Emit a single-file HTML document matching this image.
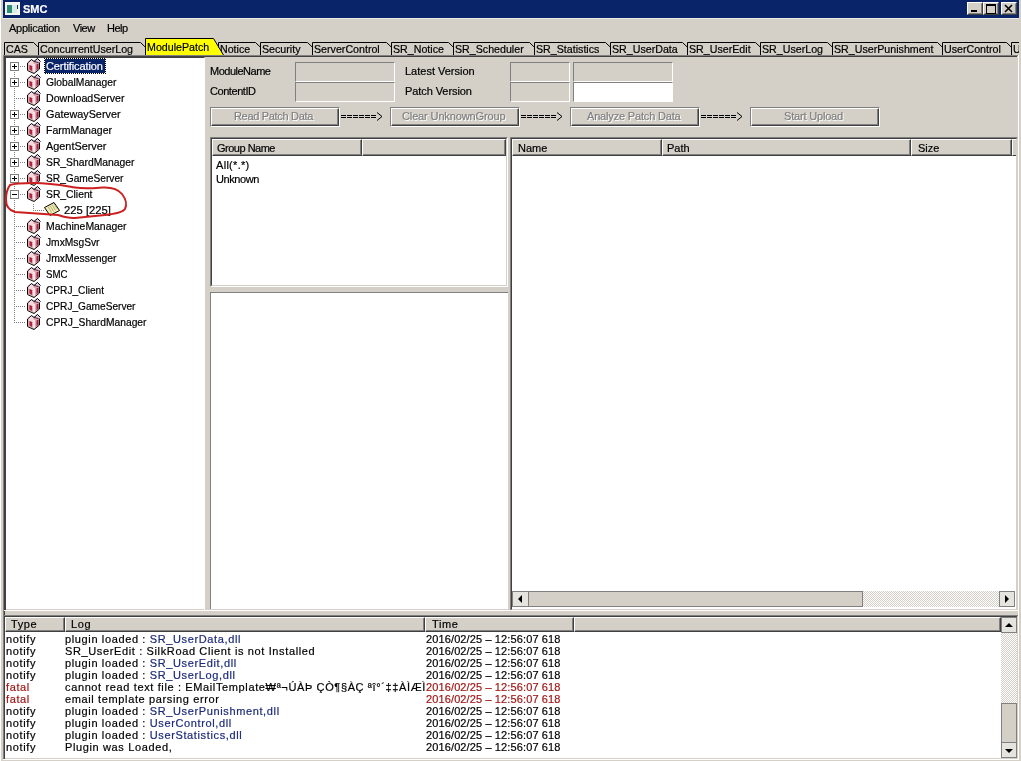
<!DOCTYPE html>
<html><head><meta charset="utf-8">
<style>
*{box-sizing:border-box}
html,body{margin:0;padding:0}
body{width:1021px;height:761px;overflow:hidden;position:relative;background:#d4d0c8;font-family:"Liberation Sans",sans-serif;font-size:11px;color:#000}
.a{position:absolute}
.t{position:absolute;white-space:pre;line-height:1;will-change:transform;-webkit-text-stroke:0.2px currentColor}
text{stroke:currentColor;stroke-width:0.2px}
svg{will-change:transform}
.sunk{position:absolute;background:#fff;border-style:solid;border-width:1px;border-color:#808080 #fff #fff #808080}
.sunk>.in{position:absolute;left:0;top:0;right:0;bottom:0;border-style:solid;border-width:1px;border-color:#404040 #d4d0c8 #d4d0c8 #404040}
.btn{position:absolute;background:#d4d0c8;border-style:solid;border-width:1px;border-color:#fff #404040 #404040 #fff}
.pbtn{position:absolute;background:#d4d0c8;border-style:solid;border-width:1px;border-color:#808080 #fff #fff #808080}
.pbtn>.in{position:absolute;left:0;top:0;right:0;bottom:0;border-style:solid;border-width:1px;border-color:#fff #404040 #404040 #fff}
.pbtn>.in>.in{position:absolute;left:0;top:0;right:0;bottom:0;border-right:1px solid #808080;border-bottom:1px solid #808080}
.btn>.in{position:absolute;left:0;top:0;right:0;bottom:0;border-style:solid;border-width:1px;border-color:#d4d0c8 #808080 #808080 #d4d0c8}
.hdr{position:absolute;background:#d4d0c8;border-style:solid;border-width:1px;border-color:#fff #404040 #404040 #fff}
.hdr>.in{position:absolute;left:0;top:0;right:0;bottom:0;border-right:1px solid #808080;border-bottom:1px solid #808080}
.dis{color:#808080;text-shadow:1px 1px 0 #fff}
.fb{border:1px solid #808080;background:#e6e4de}
.ft{border:1px solid #808080;background:#d4d0c8}
.lg{font-size:11px;letter-spacing:0.63px;line-height:13px}
.tm{letter-spacing:0.12px}
.dith{background-color:#fff;background-image:linear-gradient(45deg,#d4d0c8 25%,transparent 25%,transparent 75%,#d4d0c8 75%),linear-gradient(45deg,#d4d0c8 25%,transparent 25%,transparent 75%,#d4d0c8 75%);background-size:2px 2px;background-position:0 0,1px 1px}
</style></head>
<body>
<!-- window edge -->
<div class="a" style="left:0;top:0;width:1px;height:761px;background:#fff"></div>
<!-- title bar -->
<div class="a" style="left:3px;top:0;width:1016px;height:18px;background:#0a246a"></div>
<div class="a" style="left:5px;top:2px;width:15px;height:13px;background:#f4f4f0"></div>
<div class="a" style="left:7px;top:5px;width:5px;height:8px;background:#2e8c78"></div>
<div class="a" style="left:12px;top:5px;width:5px;height:8px;background:#d8ece8"></div>
<div class="a" style="left:17px;top:5px;width:1px;height:4px;background:#203040"></div>
<div class="t" style="left:23px;top:4px;font-weight:bold;font-size:11px;color:#fff">SMC</div>
<div class="a" style="left:3px;top:18px;width:1016px;height:1px;background:#eceae4"></div>
<!-- caption buttons -->
<div class="btn" style="left:967px;top:2px;width:16px;height:13px"><div class="in"></div></div>
<div class="btn" style="left:983px;top:2px;width:16px;height:13px"><div class="in"></div></div>
<div class="btn" style="left:1001px;top:2px;width:16px;height:13px"><div class="in"></div></div>
<svg class="a" style="left:0;top:0" width="1021" height="18">
 <rect x="971" y="10" width="6" height="2" fill="#000"/>
 <rect x="986" y="4" width="9" height="9" fill="none" stroke="#000" stroke-width="1" transform="translate(0.5,0.5)"/>
 <rect x="986" y="4" width="9" height="1" fill="#000" transform="translate(0.5,1)"/>
 <path d="M1005 5 L1012 12 M1012 5 L1005 12" stroke="#000" stroke-width="1.6"/>
</svg>
<!-- menu -->
<div class="t" style="left:9px;top:23px;letter-spacing:-0.26px">Application</div>
<div class="t" style="left:73px;top:23px;letter-spacing:-0.5px">View</div>
<div class="t" style="left:107px;top:23px;letter-spacing:-0.5px">Help</div>

<!-- tab strip -->
<svg class="a" style="left:0;top:0" width="1021" height="60"><polygon points="4,55 4,42 33,42 46.0,55" fill="#d4d0c8"/><path d="M4.5 55 V42.5 H33.5 L46.5 55" fill="none" stroke="#000" stroke-width="1"/><text x="6" y="52.5" font-family="Liberation Sans" font-size="10.67">CAS</text><polygon points="38,55 38,42 140,42 153.0,55" fill="#d4d0c8"/><path d="M38.5 55 V42.5 H140.5 L153.5 55" fill="none" stroke="#000" stroke-width="1"/><text x="40" y="52.5" font-family="Liberation Sans" font-size="10.67">ConcurrentUserLog</text><polygon points="218,55 218,42 255,42 268.0,55" fill="#d4d0c8"/><path d="M218.5 55 V42.5 H255.5 L268.5 55" fill="none" stroke="#000" stroke-width="1"/><text x="220" y="52.5" font-family="Liberation Sans" font-size="10.67">Notice</text><polygon points="260,55 260,42 307,42 320.0,55" fill="#d4d0c8"/><path d="M260.5 55 V42.5 H307.5 L320.5 55" fill="none" stroke="#000" stroke-width="1"/><text x="262" y="52.5" font-family="Liberation Sans" font-size="10.67">Security</text><polygon points="312,55 312,42 386,42 399.0,55" fill="#d4d0c8"/><path d="M312.5 55 V42.5 H386.5 L399.5 55" fill="none" stroke="#000" stroke-width="1"/><text x="314" y="52.5" font-family="Liberation Sans" font-size="10.67">ServerControl</text><polygon points="391,55 391,42 448,42 461.0,55" fill="#d4d0c8"/><path d="M391.5 55 V42.5 H448.5 L461.5 55" fill="none" stroke="#000" stroke-width="1"/><text x="393" y="52.5" font-family="Liberation Sans" font-size="10.67">SR_Notice</text><polygon points="453,55 453,42 529,42 542.0,55" fill="#d4d0c8"/><path d="M453.5 55 V42.5 H529.5 L542.5 55" fill="none" stroke="#000" stroke-width="1"/><text x="455" y="52.5" font-family="Liberation Sans" font-size="10.67">SR_Scheduler</text><polygon points="534,55 534,42 605,42 618.0,55" fill="#d4d0c8"/><path d="M534.5 55 V42.5 H605.5 L618.5 55" fill="none" stroke="#000" stroke-width="1"/><text x="536" y="52.5" font-family="Liberation Sans" font-size="10.67">SR_Statistics</text><polygon points="610,55 610,42 682,42 695.0,55" fill="#d4d0c8"/><path d="M610.5 55 V42.5 H682.5 L695.5 55" fill="none" stroke="#000" stroke-width="1"/><text x="612" y="52.5" font-family="Liberation Sans" font-size="10.67">SR_UserData</text><polygon points="687,55 687,42 755,42 768.0,55" fill="#d4d0c8"/><path d="M687.5 55 V42.5 H755.5 L768.5 55" fill="none" stroke="#000" stroke-width="1"/><text x="689" y="52.5" font-family="Liberation Sans" font-size="10.67">SR_UserEdit</text><polygon points="760,55 760,42 827,42 840.0,55" fill="#d4d0c8"/><path d="M760.5 55 V42.5 H827.5 L840.5 55" fill="none" stroke="#000" stroke-width="1"/><text x="762" y="52.5" font-family="Liberation Sans" font-size="10.67">SR_UserLog</text><polygon points="832,55 832,42 937,42 950.0,55" fill="#d4d0c8"/><path d="M832.5 55 V42.5 H937.5 L950.5 55" fill="none" stroke="#000" stroke-width="1"/><text x="834" y="52.5" font-family="Liberation Sans" font-size="10.67">SR_UserPunishment</text><polygon points="942,55 942,42 1006,42 1019.0,55" fill="#d4d0c8"/><path d="M942.5 55 V42.5 H1006.5 L1019.5 55" fill="none" stroke="#000" stroke-width="1"/><text x="944" y="52.5" font-family="Liberation Sans" font-size="10.67">UserControl</text><polygon points="1011,55 1011,42 1211,42 1224.0,55" fill="#d4d0c8"/><path d="M1011.5 55 V42.5 H1211.5 L1224.5 55" fill="none" stroke="#000" stroke-width="1"/><text x="1013" y="52.5" font-family="Liberation Sans" font-size="10.67">UserStatistics</text><polygon points="145,55 145,38 213,38 223.0,55" fill="#ffff00"/><path d="M145.5 55 V38.5 H213.5 L223.5 55" fill="none" stroke="#000" stroke-width="1"/><text x="147" y="50.5" font-family="Liberation Sans" font-size="10.67">ModulePatch</text></svg>

<!-- page frame -->
<div class="a" style="left:3px;top:55px;width:1015px;height:1px;background:#808080"></div>
<div class="a" style="left:4px;top:56px;width:1013px;height:1px;background:#404040"></div>
<div class="a" style="left:3px;top:55px;width:1px;height:705px;background:#808080"></div>
<div class="a" style="left:4px;top:56px;width:1px;height:703px;background:#404040"></div>
<div class="a" style="left:1018px;top:55px;width:1px;height:705px;background:#fff"></div>
<div class="a" style="left:3px;top:759px;width:1016px;height:1px;background:#fff"></div>

<!-- tree panel -->
<div class="a" style="left:5px;top:57px;width:200px;height:554px;background:#fff;border-style:solid;border-width:1px;border-color:#404040 #fff #fff #404040"></div>
<div class="a" style="left:6px;top:609px;width:198px;height:1px;background:#d4d0c8"></div>
<svg class="a" style="left:0;top:0" width="205" height="611"><rect x="16" y="66" width="1" height="1" fill="#808080"/><rect x="18" y="66" width="1" height="1" fill="#808080"/><rect x="20" y="66" width="1" height="1" fill="#808080"/><rect x="22" y="66" width="1" height="1" fill="#808080"/><rect x="24" y="66" width="1" height="1" fill="#808080"/><rect x="16" y="82" width="1" height="1" fill="#808080"/><rect x="18" y="82" width="1" height="1" fill="#808080"/><rect x="20" y="82" width="1" height="1" fill="#808080"/><rect x="22" y="82" width="1" height="1" fill="#808080"/><rect x="24" y="82" width="1" height="1" fill="#808080"/><rect x="16" y="98" width="1" height="1" fill="#808080"/><rect x="18" y="98" width="1" height="1" fill="#808080"/><rect x="20" y="98" width="1" height="1" fill="#808080"/><rect x="22" y="98" width="1" height="1" fill="#808080"/><rect x="24" y="98" width="1" height="1" fill="#808080"/><rect x="16" y="114" width="1" height="1" fill="#808080"/><rect x="18" y="114" width="1" height="1" fill="#808080"/><rect x="20" y="114" width="1" height="1" fill="#808080"/><rect x="22" y="114" width="1" height="1" fill="#808080"/><rect x="24" y="114" width="1" height="1" fill="#808080"/><rect x="16" y="130" width="1" height="1" fill="#808080"/><rect x="18" y="130" width="1" height="1" fill="#808080"/><rect x="20" y="130" width="1" height="1" fill="#808080"/><rect x="22" y="130" width="1" height="1" fill="#808080"/><rect x="24" y="130" width="1" height="1" fill="#808080"/><rect x="16" y="146" width="1" height="1" fill="#808080"/><rect x="18" y="146" width="1" height="1" fill="#808080"/><rect x="20" y="146" width="1" height="1" fill="#808080"/><rect x="22" y="146" width="1" height="1" fill="#808080"/><rect x="24" y="146" width="1" height="1" fill="#808080"/><rect x="16" y="162" width="1" height="1" fill="#808080"/><rect x="18" y="162" width="1" height="1" fill="#808080"/><rect x="20" y="162" width="1" height="1" fill="#808080"/><rect x="22" y="162" width="1" height="1" fill="#808080"/><rect x="24" y="162" width="1" height="1" fill="#808080"/><rect x="16" y="178" width="1" height="1" fill="#808080"/><rect x="18" y="178" width="1" height="1" fill="#808080"/><rect x="20" y="178" width="1" height="1" fill="#808080"/><rect x="22" y="178" width="1" height="1" fill="#808080"/><rect x="24" y="178" width="1" height="1" fill="#808080"/><rect x="16" y="194" width="1" height="1" fill="#808080"/><rect x="18" y="194" width="1" height="1" fill="#808080"/><rect x="20" y="194" width="1" height="1" fill="#808080"/><rect x="22" y="194" width="1" height="1" fill="#808080"/><rect x="24" y="194" width="1" height="1" fill="#808080"/><rect x="35" y="210" width="1" height="1" fill="#808080"/><rect x="37" y="210" width="1" height="1" fill="#808080"/><rect x="39" y="210" width="1" height="1" fill="#808080"/><rect x="41" y="210" width="1" height="1" fill="#808080"/><rect x="43" y="210" width="1" height="1" fill="#808080"/><rect x="16" y="226" width="1" height="1" fill="#808080"/><rect x="18" y="226" width="1" height="1" fill="#808080"/><rect x="20" y="226" width="1" height="1" fill="#808080"/><rect x="22" y="226" width="1" height="1" fill="#808080"/><rect x="24" y="226" width="1" height="1" fill="#808080"/><rect x="16" y="242" width="1" height="1" fill="#808080"/><rect x="18" y="242" width="1" height="1" fill="#808080"/><rect x="20" y="242" width="1" height="1" fill="#808080"/><rect x="22" y="242" width="1" height="1" fill="#808080"/><rect x="24" y="242" width="1" height="1" fill="#808080"/><rect x="16" y="258" width="1" height="1" fill="#808080"/><rect x="18" y="258" width="1" height="1" fill="#808080"/><rect x="20" y="258" width="1" height="1" fill="#808080"/><rect x="22" y="258" width="1" height="1" fill="#808080"/><rect x="24" y="258" width="1" height="1" fill="#808080"/><rect x="16" y="274" width="1" height="1" fill="#808080"/><rect x="18" y="274" width="1" height="1" fill="#808080"/><rect x="20" y="274" width="1" height="1" fill="#808080"/><rect x="22" y="274" width="1" height="1" fill="#808080"/><rect x="24" y="274" width="1" height="1" fill="#808080"/><rect x="16" y="290" width="1" height="1" fill="#808080"/><rect x="18" y="290" width="1" height="1" fill="#808080"/><rect x="20" y="290" width="1" height="1" fill="#808080"/><rect x="22" y="290" width="1" height="1" fill="#808080"/><rect x="24" y="290" width="1" height="1" fill="#808080"/><rect x="16" y="306" width="1" height="1" fill="#808080"/><rect x="18" y="306" width="1" height="1" fill="#808080"/><rect x="20" y="306" width="1" height="1" fill="#808080"/><rect x="22" y="306" width="1" height="1" fill="#808080"/><rect x="24" y="306" width="1" height="1" fill="#808080"/><rect x="16" y="322" width="1" height="1" fill="#808080"/><rect x="18" y="322" width="1" height="1" fill="#808080"/><rect x="20" y="322" width="1" height="1" fill="#808080"/><rect x="22" y="322" width="1" height="1" fill="#808080"/><rect x="24" y="322" width="1" height="1" fill="#808080"/><rect x="14" y="66" width="1" height="1" fill="#808080"/><rect x="14" y="68" width="1" height="1" fill="#808080"/><rect x="14" y="70" width="1" height="1" fill="#808080"/><rect x="14" y="72" width="1" height="1" fill="#808080"/><rect x="14" y="74" width="1" height="1" fill="#808080"/><rect x="14" y="76" width="1" height="1" fill="#808080"/><rect x="14" y="78" width="1" height="1" fill="#808080"/><rect x="14" y="80" width="1" height="1" fill="#808080"/><rect x="14" y="82" width="1" height="1" fill="#808080"/><rect x="14" y="84" width="1" height="1" fill="#808080"/><rect x="14" y="86" width="1" height="1" fill="#808080"/><rect x="14" y="88" width="1" height="1" fill="#808080"/><rect x="14" y="90" width="1" height="1" fill="#808080"/><rect x="14" y="92" width="1" height="1" fill="#808080"/><rect x="14" y="94" width="1" height="1" fill="#808080"/><rect x="14" y="96" width="1" height="1" fill="#808080"/><rect x="14" y="98" width="1" height="1" fill="#808080"/><rect x="14" y="100" width="1" height="1" fill="#808080"/><rect x="14" y="102" width="1" height="1" fill="#808080"/><rect x="14" y="104" width="1" height="1" fill="#808080"/><rect x="14" y="106" width="1" height="1" fill="#808080"/><rect x="14" y="108" width="1" height="1" fill="#808080"/><rect x="14" y="110" width="1" height="1" fill="#808080"/><rect x="14" y="112" width="1" height="1" fill="#808080"/><rect x="14" y="114" width="1" height="1" fill="#808080"/><rect x="14" y="116" width="1" height="1" fill="#808080"/><rect x="14" y="118" width="1" height="1" fill="#808080"/><rect x="14" y="120" width="1" height="1" fill="#808080"/><rect x="14" y="122" width="1" height="1" fill="#808080"/><rect x="14" y="124" width="1" height="1" fill="#808080"/><rect x="14" y="126" width="1" height="1" fill="#808080"/><rect x="14" y="128" width="1" height="1" fill="#808080"/><rect x="14" y="130" width="1" height="1" fill="#808080"/><rect x="14" y="132" width="1" height="1" fill="#808080"/><rect x="14" y="134" width="1" height="1" fill="#808080"/><rect x="14" y="136" width="1" height="1" fill="#808080"/><rect x="14" y="138" width="1" height="1" fill="#808080"/><rect x="14" y="140" width="1" height="1" fill="#808080"/><rect x="14" y="142" width="1" height="1" fill="#808080"/><rect x="14" y="144" width="1" height="1" fill="#808080"/><rect x="14" y="146" width="1" height="1" fill="#808080"/><rect x="14" y="148" width="1" height="1" fill="#808080"/><rect x="14" y="150" width="1" height="1" fill="#808080"/><rect x="14" y="152" width="1" height="1" fill="#808080"/><rect x="14" y="154" width="1" height="1" fill="#808080"/><rect x="14" y="156" width="1" height="1" fill="#808080"/><rect x="14" y="158" width="1" height="1" fill="#808080"/><rect x="14" y="160" width="1" height="1" fill="#808080"/><rect x="14" y="162" width="1" height="1" fill="#808080"/><rect x="14" y="164" width="1" height="1" fill="#808080"/><rect x="14" y="166" width="1" height="1" fill="#808080"/><rect x="14" y="168" width="1" height="1" fill="#808080"/><rect x="14" y="170" width="1" height="1" fill="#808080"/><rect x="14" y="172" width="1" height="1" fill="#808080"/><rect x="14" y="174" width="1" height="1" fill="#808080"/><rect x="14" y="176" width="1" height="1" fill="#808080"/><rect x="14" y="178" width="1" height="1" fill="#808080"/><rect x="14" y="180" width="1" height="1" fill="#808080"/><rect x="14" y="182" width="1" height="1" fill="#808080"/><rect x="14" y="184" width="1" height="1" fill="#808080"/><rect x="14" y="186" width="1" height="1" fill="#808080"/><rect x="14" y="188" width="1" height="1" fill="#808080"/><rect x="14" y="190" width="1" height="1" fill="#808080"/><rect x="14" y="192" width="1" height="1" fill="#808080"/><rect x="14" y="194" width="1" height="1" fill="#808080"/><rect x="14" y="196" width="1" height="1" fill="#808080"/><rect x="14" y="198" width="1" height="1" fill="#808080"/><rect x="14" y="200" width="1" height="1" fill="#808080"/><rect x="14" y="202" width="1" height="1" fill="#808080"/><rect x="14" y="204" width="1" height="1" fill="#808080"/><rect x="14" y="206" width="1" height="1" fill="#808080"/><rect x="14" y="208" width="1" height="1" fill="#808080"/><rect x="14" y="210" width="1" height="1" fill="#808080"/><rect x="14" y="212" width="1" height="1" fill="#808080"/><rect x="14" y="214" width="1" height="1" fill="#808080"/><rect x="14" y="216" width="1" height="1" fill="#808080"/><rect x="14" y="218" width="1" height="1" fill="#808080"/><rect x="14" y="220" width="1" height="1" fill="#808080"/><rect x="14" y="222" width="1" height="1" fill="#808080"/><rect x="14" y="224" width="1" height="1" fill="#808080"/><rect x="14" y="226" width="1" height="1" fill="#808080"/><rect x="14" y="228" width="1" height="1" fill="#808080"/><rect x="14" y="230" width="1" height="1" fill="#808080"/><rect x="14" y="232" width="1" height="1" fill="#808080"/><rect x="14" y="234" width="1" height="1" fill="#808080"/><rect x="14" y="236" width="1" height="1" fill="#808080"/><rect x="14" y="238" width="1" height="1" fill="#808080"/><rect x="14" y="240" width="1" height="1" fill="#808080"/><rect x="14" y="242" width="1" height="1" fill="#808080"/><rect x="14" y="244" width="1" height="1" fill="#808080"/><rect x="14" y="246" width="1" height="1" fill="#808080"/><rect x="14" y="248" width="1" height="1" fill="#808080"/><rect x="14" y="250" width="1" height="1" fill="#808080"/><rect x="14" y="252" width="1" height="1" fill="#808080"/><rect x="14" y="254" width="1" height="1" fill="#808080"/><rect x="14" y="256" width="1" height="1" fill="#808080"/><rect x="14" y="258" width="1" height="1" fill="#808080"/><rect x="14" y="260" width="1" height="1" fill="#808080"/><rect x="14" y="262" width="1" height="1" fill="#808080"/><rect x="14" y="264" width="1" height="1" fill="#808080"/><rect x="14" y="266" width="1" height="1" fill="#808080"/><rect x="14" y="268" width="1" height="1" fill="#808080"/><rect x="14" y="270" width="1" height="1" fill="#808080"/><rect x="14" y="272" width="1" height="1" fill="#808080"/><rect x="14" y="274" width="1" height="1" fill="#808080"/><rect x="14" y="276" width="1" height="1" fill="#808080"/><rect x="14" y="278" width="1" height="1" fill="#808080"/><rect x="14" y="280" width="1" height="1" fill="#808080"/><rect x="14" y="282" width="1" height="1" fill="#808080"/><rect x="14" y="284" width="1" height="1" fill="#808080"/><rect x="14" y="286" width="1" height="1" fill="#808080"/><rect x="14" y="288" width="1" height="1" fill="#808080"/><rect x="14" y="290" width="1" height="1" fill="#808080"/><rect x="14" y="292" width="1" height="1" fill="#808080"/><rect x="14" y="294" width="1" height="1" fill="#808080"/><rect x="14" y="296" width="1" height="1" fill="#808080"/><rect x="14" y="298" width="1" height="1" fill="#808080"/><rect x="14" y="300" width="1" height="1" fill="#808080"/><rect x="14" y="302" width="1" height="1" fill="#808080"/><rect x="14" y="304" width="1" height="1" fill="#808080"/><rect x="14" y="306" width="1" height="1" fill="#808080"/><rect x="14" y="308" width="1" height="1" fill="#808080"/><rect x="14" y="310" width="1" height="1" fill="#808080"/><rect x="14" y="312" width="1" height="1" fill="#808080"/><rect x="14" y="314" width="1" height="1" fill="#808080"/><rect x="14" y="316" width="1" height="1" fill="#808080"/><rect x="14" y="318" width="1" height="1" fill="#808080"/><rect x="14" y="320" width="1" height="1" fill="#808080"/><rect x="14" y="322" width="1" height="1" fill="#808080"/><rect x="33" y="204" width="1" height="1" fill="#808080"/><rect x="33" y="206" width="1" height="1" fill="#808080"/><rect x="33" y="208" width="1" height="1" fill="#808080"/><rect x="33" y="210" width="1" height="1" fill="#808080"/><rect x="10.5" y="62.5" width="8" height="8" fill="#fff" stroke="#808080"/><rect x="12" y="66" width="5" height="1" fill="#000"/><rect x="14" y="64" width="1" height="5" fill="#000"/><g transform="translate(27,58)"><polygon points="1,5 4.5,1.5 7,3 10.5,0 13.5,3.5 12.5,4.5 12.5,10.5 7,15 1,12" fill="#e4a8b2"/><polygon points="1.5,5 4.5,2 7,3.5 6,8 2,7" fill="#f6d8dc"/><polygon points="7,3 10.5,0.5 13,3.5 12,4.5 9,5" fill="#dcd4ec"/><rect x="6" y="6" width="2" height="8" fill="#f4e4e8"/><path d="M2.5 7 L2.5 11.5 L5 13 L5 8 Z" fill="#a82840"/><path d="M9.5 6.5 L11.5 5.5 L11.5 10.5 L9.5 12.5 Z" fill="#982038"/><polyline points="0.5,12.5 0.5,5 4.5,1.5 7,3.5 10.5,0.5 13.5,3.5" fill="none" stroke="#000" stroke-width="1"/><polyline points="12.5,4.5 12.5,11 7,15.5 0.5,12.5" fill="none" stroke="#000" stroke-width="1"/><path d="M7 3.5 L11.5 4.5" stroke="#401018" stroke-width="1"/></g><rect x="44" y="58" width="62" height="16" fill="#0a246a"/><rect x="44" y="58" width="1" height="1" fill="#000"/><rect x="44" y="73" width="1" height="1" fill="#fff"/><rect x="45" y="58" width="1" height="1" fill="#fff"/><rect x="45" y="73" width="1" height="1" fill="#000"/><rect x="46" y="58" width="1" height="1" fill="#000"/><rect x="46" y="73" width="1" height="1" fill="#fff"/><rect x="47" y="58" width="1" height="1" fill="#fff"/><rect x="47" y="73" width="1" height="1" fill="#000"/><rect x="48" y="58" width="1" height="1" fill="#000"/><rect x="48" y="73" width="1" height="1" fill="#fff"/><rect x="49" y="58" width="1" height="1" fill="#fff"/><rect x="49" y="73" width="1" height="1" fill="#000"/><rect x="50" y="58" width="1" height="1" fill="#000"/><rect x="50" y="73" width="1" height="1" fill="#fff"/><rect x="51" y="58" width="1" height="1" fill="#fff"/><rect x="51" y="73" width="1" height="1" fill="#000"/><rect x="52" y="58" width="1" height="1" fill="#000"/><rect x="52" y="73" width="1" height="1" fill="#fff"/><rect x="53" y="58" width="1" height="1" fill="#fff"/><rect x="53" y="73" width="1" height="1" fill="#000"/><rect x="54" y="58" width="1" height="1" fill="#000"/><rect x="54" y="73" width="1" height="1" fill="#fff"/><rect x="55" y="58" width="1" height="1" fill="#fff"/><rect x="55" y="73" width="1" height="1" fill="#000"/><rect x="56" y="58" width="1" height="1" fill="#000"/><rect x="56" y="73" width="1" height="1" fill="#fff"/><rect x="57" y="58" width="1" height="1" fill="#fff"/><rect x="57" y="73" width="1" height="1" fill="#000"/><rect x="58" y="58" width="1" height="1" fill="#000"/><rect x="58" y="73" width="1" height="1" fill="#fff"/><rect x="59" y="58" width="1" height="1" fill="#fff"/><rect x="59" y="73" width="1" height="1" fill="#000"/><rect x="60" y="58" width="1" height="1" fill="#000"/><rect x="60" y="73" width="1" height="1" fill="#fff"/><rect x="61" y="58" width="1" height="1" fill="#fff"/><rect x="61" y="73" width="1" height="1" fill="#000"/><rect x="62" y="58" width="1" height="1" fill="#000"/><rect x="62" y="73" width="1" height="1" fill="#fff"/><rect x="63" y="58" width="1" height="1" fill="#fff"/><rect x="63" y="73" width="1" height="1" fill="#000"/><rect x="64" y="58" width="1" height="1" fill="#000"/><rect x="64" y="73" width="1" height="1" fill="#fff"/><rect x="65" y="58" width="1" height="1" fill="#fff"/><rect x="65" y="73" width="1" height="1" fill="#000"/><rect x="66" y="58" width="1" height="1" fill="#000"/><rect x="66" y="73" width="1" height="1" fill="#fff"/><rect x="67" y="58" width="1" height="1" fill="#fff"/><rect x="67" y="73" width="1" height="1" fill="#000"/><rect x="68" y="58" width="1" height="1" fill="#000"/><rect x="68" y="73" width="1" height="1" fill="#fff"/><rect x="69" y="58" width="1" height="1" fill="#fff"/><rect x="69" y="73" width="1" height="1" fill="#000"/><rect x="70" y="58" width="1" height="1" fill="#000"/><rect x="70" y="73" width="1" height="1" fill="#fff"/><rect x="71" y="58" width="1" height="1" fill="#fff"/><rect x="71" y="73" width="1" height="1" fill="#000"/><rect x="72" y="58" width="1" height="1" fill="#000"/><rect x="72" y="73" width="1" height="1" fill="#fff"/><rect x="73" y="58" width="1" height="1" fill="#fff"/><rect x="73" y="73" width="1" height="1" fill="#000"/><rect x="74" y="58" width="1" height="1" fill="#000"/><rect x="74" y="73" width="1" height="1" fill="#fff"/><rect x="75" y="58" width="1" height="1" fill="#fff"/><rect x="75" y="73" width="1" height="1" fill="#000"/><rect x="76" y="58" width="1" height="1" fill="#000"/><rect x="76" y="73" width="1" height="1" fill="#fff"/><rect x="77" y="58" width="1" height="1" fill="#fff"/><rect x="77" y="73" width="1" height="1" fill="#000"/><rect x="78" y="58" width="1" height="1" fill="#000"/><rect x="78" y="73" width="1" height="1" fill="#fff"/><rect x="79" y="58" width="1" height="1" fill="#fff"/><rect x="79" y="73" width="1" height="1" fill="#000"/><rect x="80" y="58" width="1" height="1" fill="#000"/><rect x="80" y="73" width="1" height="1" fill="#fff"/><rect x="81" y="58" width="1" height="1" fill="#fff"/><rect x="81" y="73" width="1" height="1" fill="#000"/><rect x="82" y="58" width="1" height="1" fill="#000"/><rect x="82" y="73" width="1" height="1" fill="#fff"/><rect x="83" y="58" width="1" height="1" fill="#fff"/><rect x="83" y="73" width="1" height="1" fill="#000"/><rect x="84" y="58" width="1" height="1" fill="#000"/><rect x="84" y="73" width="1" height="1" fill="#fff"/><rect x="85" y="58" width="1" height="1" fill="#fff"/><rect x="85" y="73" width="1" height="1" fill="#000"/><rect x="86" y="58" width="1" height="1" fill="#000"/><rect x="86" y="73" width="1" height="1" fill="#fff"/><rect x="87" y="58" width="1" height="1" fill="#fff"/><rect x="87" y="73" width="1" height="1" fill="#000"/><rect x="88" y="58" width="1" height="1" fill="#000"/><rect x="88" y="73" width="1" height="1" fill="#fff"/><rect x="89" y="58" width="1" height="1" fill="#fff"/><rect x="89" y="73" width="1" height="1" fill="#000"/><rect x="90" y="58" width="1" height="1" fill="#000"/><rect x="90" y="73" width="1" height="1" fill="#fff"/><rect x="91" y="58" width="1" height="1" fill="#fff"/><rect x="91" y="73" width="1" height="1" fill="#000"/><rect x="92" y="58" width="1" height="1" fill="#000"/><rect x="92" y="73" width="1" height="1" fill="#fff"/><rect x="93" y="58" width="1" height="1" fill="#fff"/><rect x="93" y="73" width="1" height="1" fill="#000"/><rect x="94" y="58" width="1" height="1" fill="#000"/><rect x="94" y="73" width="1" height="1" fill="#fff"/><rect x="95" y="58" width="1" height="1" fill="#fff"/><rect x="95" y="73" width="1" height="1" fill="#000"/><rect x="96" y="58" width="1" height="1" fill="#000"/><rect x="96" y="73" width="1" height="1" fill="#fff"/><rect x="97" y="58" width="1" height="1" fill="#fff"/><rect x="97" y="73" width="1" height="1" fill="#000"/><rect x="98" y="58" width="1" height="1" fill="#000"/><rect x="98" y="73" width="1" height="1" fill="#fff"/><rect x="99" y="58" width="1" height="1" fill="#fff"/><rect x="99" y="73" width="1" height="1" fill="#000"/><rect x="100" y="58" width="1" height="1" fill="#000"/><rect x="100" y="73" width="1" height="1" fill="#fff"/><rect x="101" y="58" width="1" height="1" fill="#fff"/><rect x="101" y="73" width="1" height="1" fill="#000"/><rect x="102" y="58" width="1" height="1" fill="#000"/><rect x="102" y="73" width="1" height="1" fill="#fff"/><rect x="103" y="58" width="1" height="1" fill="#fff"/><rect x="103" y="73" width="1" height="1" fill="#000"/><rect x="104" y="58" width="1" height="1" fill="#000"/><rect x="104" y="73" width="1" height="1" fill="#fff"/><rect x="105" y="58" width="1" height="1" fill="#fff"/><rect x="105" y="73" width="1" height="1" fill="#000"/><rect x="44" y="59" width="1" height="1" fill="#fff"/><rect x="105" y="59" width="1" height="1" fill="#000"/><rect x="44" y="60" width="1" height="1" fill="#000"/><rect x="105" y="60" width="1" height="1" fill="#fff"/><rect x="44" y="61" width="1" height="1" fill="#fff"/><rect x="105" y="61" width="1" height="1" fill="#000"/><rect x="44" y="62" width="1" height="1" fill="#000"/><rect x="105" y="62" width="1" height="1" fill="#fff"/><rect x="44" y="63" width="1" height="1" fill="#fff"/><rect x="105" y="63" width="1" height="1" fill="#000"/><rect x="44" y="64" width="1" height="1" fill="#000"/><rect x="105" y="64" width="1" height="1" fill="#fff"/><rect x="44" y="65" width="1" height="1" fill="#fff"/><rect x="105" y="65" width="1" height="1" fill="#000"/><rect x="44" y="66" width="1" height="1" fill="#000"/><rect x="105" y="66" width="1" height="1" fill="#fff"/><rect x="44" y="67" width="1" height="1" fill="#fff"/><rect x="105" y="67" width="1" height="1" fill="#000"/><rect x="44" y="68" width="1" height="1" fill="#000"/><rect x="105" y="68" width="1" height="1" fill="#fff"/><rect x="44" y="69" width="1" height="1" fill="#fff"/><rect x="105" y="69" width="1" height="1" fill="#000"/><rect x="44" y="70" width="1" height="1" fill="#000"/><rect x="105" y="70" width="1" height="1" fill="#fff"/><rect x="44" y="71" width="1" height="1" fill="#fff"/><rect x="105" y="71" width="1" height="1" fill="#000"/><rect x="44" y="72" width="1" height="1" fill="#000"/><rect x="105" y="72" width="1" height="1" fill="#fff"/><text x="46" y="70" font-family="Liberation Sans" font-size="11" letter-spacing="-0.1" fill="#fff" style="stroke:#fff;stroke-width:0.2px">Certification</text><rect x="10.5" y="78.5" width="8" height="8" fill="#fff" stroke="#808080"/><rect x="12" y="82" width="5" height="1" fill="#000"/><rect x="14" y="80" width="1" height="5" fill="#000"/><g transform="translate(27,74)"><polygon points="1,5 4.5,1.5 7,3 10.5,0 13.5,3.5 12.5,4.5 12.5,10.5 7,15 1,12" fill="#e4a8b2"/><polygon points="1.5,5 4.5,2 7,3.5 6,8 2,7" fill="#f6d8dc"/><polygon points="7,3 10.5,0.5 13,3.5 12,4.5 9,5" fill="#dcd4ec"/><rect x="6" y="6" width="2" height="8" fill="#f4e4e8"/><path d="M2.5 7 L2.5 11.5 L5 13 L5 8 Z" fill="#a82840"/><path d="M9.5 6.5 L11.5 5.5 L11.5 10.5 L9.5 12.5 Z" fill="#982038"/><polyline points="0.5,12.5 0.5,5 4.5,1.5 7,3.5 10.5,0.5 13.5,3.5" fill="none" stroke="#000" stroke-width="1"/><polyline points="12.5,4.5 12.5,11 7,15.5 0.5,12.5" fill="none" stroke="#000" stroke-width="1"/><path d="M7 3.5 L11.5 4.5" stroke="#401018" stroke-width="1"/></g><text x="46" y="86" font-family="Liberation Sans" font-size="11" textLength="70.5" lengthAdjust="spacingAndGlyphs">GlobalManager</text><g transform="translate(27,90)"><polygon points="1,5 4.5,1.5 7,3 10.5,0 13.5,3.5 12.5,4.5 12.5,10.5 7,15 1,12" fill="#e4a8b2"/><polygon points="1.5,5 4.5,2 7,3.5 6,8 2,7" fill="#f6d8dc"/><polygon points="7,3 10.5,0.5 13,3.5 12,4.5 9,5" fill="#dcd4ec"/><rect x="6" y="6" width="2" height="8" fill="#f4e4e8"/><path d="M2.5 7 L2.5 11.5 L5 13 L5 8 Z" fill="#a82840"/><path d="M9.5 6.5 L11.5 5.5 L11.5 10.5 L9.5 12.5 Z" fill="#982038"/><polyline points="0.5,12.5 0.5,5 4.5,1.5 7,3.5 10.5,0.5 13.5,3.5" fill="none" stroke="#000" stroke-width="1"/><polyline points="12.5,4.5 12.5,11 7,15.5 0.5,12.5" fill="none" stroke="#000" stroke-width="1"/><path d="M7 3.5 L11.5 4.5" stroke="#401018" stroke-width="1"/></g><text x="46" y="102" font-family="Liberation Sans" font-size="11" textLength="78.5" lengthAdjust="spacingAndGlyphs">DownloadServer</text><rect x="10.5" y="110.5" width="8" height="8" fill="#fff" stroke="#808080"/><rect x="12" y="114" width="5" height="1" fill="#000"/><rect x="14" y="112" width="1" height="5" fill="#000"/><g transform="translate(27,106)"><polygon points="1,5 4.5,1.5 7,3 10.5,0 13.5,3.5 12.5,4.5 12.5,10.5 7,15 1,12" fill="#e4a8b2"/><polygon points="1.5,5 4.5,2 7,3.5 6,8 2,7" fill="#f6d8dc"/><polygon points="7,3 10.5,0.5 13,3.5 12,4.5 9,5" fill="#dcd4ec"/><rect x="6" y="6" width="2" height="8" fill="#f4e4e8"/><path d="M2.5 7 L2.5 11.5 L5 13 L5 8 Z" fill="#a82840"/><path d="M9.5 6.5 L11.5 5.5 L11.5 10.5 L9.5 12.5 Z" fill="#982038"/><polyline points="0.5,12.5 0.5,5 4.5,1.5 7,3.5 10.5,0.5 13.5,3.5" fill="none" stroke="#000" stroke-width="1"/><polyline points="12.5,4.5 12.5,11 7,15.5 0.5,12.5" fill="none" stroke="#000" stroke-width="1"/><path d="M7 3.5 L11.5 4.5" stroke="#401018" stroke-width="1"/></g><text x="46" y="118" font-family="Liberation Sans" font-size="11" textLength="74.5" lengthAdjust="spacingAndGlyphs">GatewayServer</text><rect x="10.5" y="126.5" width="8" height="8" fill="#fff" stroke="#808080"/><rect x="12" y="130" width="5" height="1" fill="#000"/><rect x="14" y="128" width="1" height="5" fill="#000"/><g transform="translate(27,122)"><polygon points="1,5 4.5,1.5 7,3 10.5,0 13.5,3.5 12.5,4.5 12.5,10.5 7,15 1,12" fill="#e4a8b2"/><polygon points="1.5,5 4.5,2 7,3.5 6,8 2,7" fill="#f6d8dc"/><polygon points="7,3 10.5,0.5 13,3.5 12,4.5 9,5" fill="#dcd4ec"/><rect x="6" y="6" width="2" height="8" fill="#f4e4e8"/><path d="M2.5 7 L2.5 11.5 L5 13 L5 8 Z" fill="#a82840"/><path d="M9.5 6.5 L11.5 5.5 L11.5 10.5 L9.5 12.5 Z" fill="#982038"/><polyline points="0.5,12.5 0.5,5 4.5,1.5 7,3.5 10.5,0.5 13.5,3.5" fill="none" stroke="#000" stroke-width="1"/><polyline points="12.5,4.5 12.5,11 7,15.5 0.5,12.5" fill="none" stroke="#000" stroke-width="1"/><path d="M7 3.5 L11.5 4.5" stroke="#401018" stroke-width="1"/></g><text x="46" y="134" font-family="Liberation Sans" font-size="11" textLength="66.0" lengthAdjust="spacingAndGlyphs">FarmManager</text><rect x="10.5" y="142.5" width="8" height="8" fill="#fff" stroke="#808080"/><rect x="12" y="146" width="5" height="1" fill="#000"/><rect x="14" y="144" width="1" height="5" fill="#000"/><g transform="translate(27,138)"><polygon points="1,5 4.5,1.5 7,3 10.5,0 13.5,3.5 12.5,4.5 12.5,10.5 7,15 1,12" fill="#e4a8b2"/><polygon points="1.5,5 4.5,2 7,3.5 6,8 2,7" fill="#f6d8dc"/><polygon points="7,3 10.5,0.5 13,3.5 12,4.5 9,5" fill="#dcd4ec"/><rect x="6" y="6" width="2" height="8" fill="#f4e4e8"/><path d="M2.5 7 L2.5 11.5 L5 13 L5 8 Z" fill="#a82840"/><path d="M9.5 6.5 L11.5 5.5 L11.5 10.5 L9.5 12.5 Z" fill="#982038"/><polyline points="0.5,12.5 0.5,5 4.5,1.5 7,3.5 10.5,0.5 13.5,3.5" fill="none" stroke="#000" stroke-width="1"/><polyline points="12.5,4.5 12.5,11 7,15.5 0.5,12.5" fill="none" stroke="#000" stroke-width="1"/><path d="M7 3.5 L11.5 4.5" stroke="#401018" stroke-width="1"/></g><text x="46" y="150" font-family="Liberation Sans" font-size="11" textLength="60.5" lengthAdjust="spacingAndGlyphs">AgentServer</text><rect x="10.5" y="158.5" width="8" height="8" fill="#fff" stroke="#808080"/><rect x="12" y="162" width="5" height="1" fill="#000"/><rect x="14" y="160" width="1" height="5" fill="#000"/><g transform="translate(27,154)"><polygon points="1,5 4.5,1.5 7,3 10.5,0 13.5,3.5 12.5,4.5 12.5,10.5 7,15 1,12" fill="#e4a8b2"/><polygon points="1.5,5 4.5,2 7,3.5 6,8 2,7" fill="#f6d8dc"/><polygon points="7,3 10.5,0.5 13,3.5 12,4.5 9,5" fill="#dcd4ec"/><rect x="6" y="6" width="2" height="8" fill="#f4e4e8"/><path d="M2.5 7 L2.5 11.5 L5 13 L5 8 Z" fill="#a82840"/><path d="M9.5 6.5 L11.5 5.5 L11.5 10.5 L9.5 12.5 Z" fill="#982038"/><polyline points="0.5,12.5 0.5,5 4.5,1.5 7,3.5 10.5,0.5 13.5,3.5" fill="none" stroke="#000" stroke-width="1"/><polyline points="12.5,4.5 12.5,11 7,15.5 0.5,12.5" fill="none" stroke="#000" stroke-width="1"/><path d="M7 3.5 L11.5 4.5" stroke="#401018" stroke-width="1"/></g><text x="46" y="166" font-family="Liberation Sans" font-size="11" textLength="88.5" lengthAdjust="spacingAndGlyphs">SR_ShardManager</text><rect x="10.5" y="174.5" width="8" height="8" fill="#fff" stroke="#808080"/><rect x="12" y="178" width="5" height="1" fill="#000"/><rect x="14" y="176" width="1" height="5" fill="#000"/><g transform="translate(27,170)"><polygon points="1,5 4.5,1.5 7,3 10.5,0 13.5,3.5 12.5,4.5 12.5,10.5 7,15 1,12" fill="#e4a8b2"/><polygon points="1.5,5 4.5,2 7,3.5 6,8 2,7" fill="#f6d8dc"/><polygon points="7,3 10.5,0.5 13,3.5 12,4.5 9,5" fill="#dcd4ec"/><rect x="6" y="6" width="2" height="8" fill="#f4e4e8"/><path d="M2.5 7 L2.5 11.5 L5 13 L5 8 Z" fill="#a82840"/><path d="M9.5 6.5 L11.5 5.5 L11.5 10.5 L9.5 12.5 Z" fill="#982038"/><polyline points="0.5,12.5 0.5,5 4.5,1.5 7,3.5 10.5,0.5 13.5,3.5" fill="none" stroke="#000" stroke-width="1"/><polyline points="12.5,4.5 12.5,11 7,15.5 0.5,12.5" fill="none" stroke="#000" stroke-width="1"/><path d="M7 3.5 L11.5 4.5" stroke="#401018" stroke-width="1"/></g><text x="46" y="182" font-family="Liberation Sans" font-size="11" textLength="77.5" lengthAdjust="spacingAndGlyphs">SR_GameServer</text><rect x="10.5" y="190.5" width="8" height="8" fill="#fff" stroke="#808080"/><rect x="12" y="194" width="5" height="1" fill="#000"/><g transform="translate(27,186)"><polygon points="1,5 4.5,1.5 7,3 10.5,0 13.5,3.5 12.5,4.5 12.5,10.5 7,15 1,12" fill="#e4a8b2"/><polygon points="1.5,5 4.5,2 7,3.5 6,8 2,7" fill="#f6d8dc"/><polygon points="7,3 10.5,0.5 13,3.5 12,4.5 9,5" fill="#dcd4ec"/><rect x="6" y="6" width="2" height="8" fill="#f4e4e8"/><path d="M2.5 7 L2.5 11.5 L5 13 L5 8 Z" fill="#a82840"/><path d="M9.5 6.5 L11.5 5.5 L11.5 10.5 L9.5 12.5 Z" fill="#982038"/><polyline points="0.5,12.5 0.5,5 4.5,1.5 7,3.5 10.5,0.5 13.5,3.5" fill="none" stroke="#000" stroke-width="1"/><polyline points="12.5,4.5 12.5,11 7,15.5 0.5,12.5" fill="none" stroke="#000" stroke-width="1"/><path d="M7 3.5 L11.5 4.5" stroke="#401018" stroke-width="1"/></g><text x="46" y="198" font-family="Liberation Sans" font-size="11" textLength="46.5" lengthAdjust="spacingAndGlyphs">SR_Client</text><g transform="translate(44,202)"><polygon points="0.5,5.5 10,0.5 15.5,8.5 6,13.5" fill="#f2eeb0" stroke="#000" stroke-width="1" stroke-linejoin="miter"/><path d="M4 4.5 L7.6 10.5 M6 3.5 L9.6 9.5 M8 2.5 L11.6 8.5 M10 1.8 L13 6.8" stroke="#a8a078" stroke-width="0.8"/></g><text x="64" y="214" font-family="Liberation Sans" font-size="11" textLength="47.0" lengthAdjust="spacingAndGlyphs">225 [225]</text><g transform="translate(27,218)"><polygon points="1,5 4.5,1.5 7,3 10.5,0 13.5,3.5 12.5,4.5 12.5,10.5 7,15 1,12" fill="#e4a8b2"/><polygon points="1.5,5 4.5,2 7,3.5 6,8 2,7" fill="#f6d8dc"/><polygon points="7,3 10.5,0.5 13,3.5 12,4.5 9,5" fill="#dcd4ec"/><rect x="6" y="6" width="2" height="8" fill="#f4e4e8"/><path d="M2.5 7 L2.5 11.5 L5 13 L5 8 Z" fill="#a82840"/><path d="M9.5 6.5 L11.5 5.5 L11.5 10.5 L9.5 12.5 Z" fill="#982038"/><polyline points="0.5,12.5 0.5,5 4.5,1.5 7,3.5 10.5,0.5 13.5,3.5" fill="none" stroke="#000" stroke-width="1"/><polyline points="12.5,4.5 12.5,11 7,15.5 0.5,12.5" fill="none" stroke="#000" stroke-width="1"/><path d="M7 3.5 L11.5 4.5" stroke="#401018" stroke-width="1"/></g><text x="46" y="230" font-family="Liberation Sans" font-size="11" textLength="80.5" lengthAdjust="spacingAndGlyphs">MachineManager</text><g transform="translate(27,234)"><polygon points="1,5 4.5,1.5 7,3 10.5,0 13.5,3.5 12.5,4.5 12.5,10.5 7,15 1,12" fill="#e4a8b2"/><polygon points="1.5,5 4.5,2 7,3.5 6,8 2,7" fill="#f6d8dc"/><polygon points="7,3 10.5,0.5 13,3.5 12,4.5 9,5" fill="#dcd4ec"/><rect x="6" y="6" width="2" height="8" fill="#f4e4e8"/><path d="M2.5 7 L2.5 11.5 L5 13 L5 8 Z" fill="#a82840"/><path d="M9.5 6.5 L11.5 5.5 L11.5 10.5 L9.5 12.5 Z" fill="#982038"/><polyline points="0.5,12.5 0.5,5 4.5,1.5 7,3.5 10.5,0.5 13.5,3.5" fill="none" stroke="#000" stroke-width="1"/><polyline points="12.5,4.5 12.5,11 7,15.5 0.5,12.5" fill="none" stroke="#000" stroke-width="1"/><path d="M7 3.5 L11.5 4.5" stroke="#401018" stroke-width="1"/></g><text x="46" y="246" font-family="Liberation Sans" font-size="11" textLength="53.5" lengthAdjust="spacingAndGlyphs">JmxMsgSvr</text><g transform="translate(27,250)"><polygon points="1,5 4.5,1.5 7,3 10.5,0 13.5,3.5 12.5,4.5 12.5,10.5 7,15 1,12" fill="#e4a8b2"/><polygon points="1.5,5 4.5,2 7,3.5 6,8 2,7" fill="#f6d8dc"/><polygon points="7,3 10.5,0.5 13,3.5 12,4.5 9,5" fill="#dcd4ec"/><rect x="6" y="6" width="2" height="8" fill="#f4e4e8"/><path d="M2.5 7 L2.5 11.5 L5 13 L5 8 Z" fill="#a82840"/><path d="M9.5 6.5 L11.5 5.5 L11.5 10.5 L9.5 12.5 Z" fill="#982038"/><polyline points="0.5,12.5 0.5,5 4.5,1.5 7,3.5 10.5,0.5 13.5,3.5" fill="none" stroke="#000" stroke-width="1"/><polyline points="12.5,4.5 12.5,11 7,15.5 0.5,12.5" fill="none" stroke="#000" stroke-width="1"/><path d="M7 3.5 L11.5 4.5" stroke="#401018" stroke-width="1"/></g><text x="46" y="262" font-family="Liberation Sans" font-size="11" textLength="70.5" lengthAdjust="spacingAndGlyphs">JmxMessenger</text><g transform="translate(27,266)"><polygon points="1,5 4.5,1.5 7,3 10.5,0 13.5,3.5 12.5,4.5 12.5,10.5 7,15 1,12" fill="#e4a8b2"/><polygon points="1.5,5 4.5,2 7,3.5 6,8 2,7" fill="#f6d8dc"/><polygon points="7,3 10.5,0.5 13,3.5 12,4.5 9,5" fill="#dcd4ec"/><rect x="6" y="6" width="2" height="8" fill="#f4e4e8"/><path d="M2.5 7 L2.5 11.5 L5 13 L5 8 Z" fill="#a82840"/><path d="M9.5 6.5 L11.5 5.5 L11.5 10.5 L9.5 12.5 Z" fill="#982038"/><polyline points="0.5,12.5 0.5,5 4.5,1.5 7,3.5 10.5,0.5 13.5,3.5" fill="none" stroke="#000" stroke-width="1"/><polyline points="12.5,4.5 12.5,11 7,15.5 0.5,12.5" fill="none" stroke="#000" stroke-width="1"/><path d="M7 3.5 L11.5 4.5" stroke="#401018" stroke-width="1"/></g><text x="46" y="278" font-family="Liberation Sans" font-size="11" textLength="21.5" lengthAdjust="spacingAndGlyphs">SMC</text><g transform="translate(27,282)"><polygon points="1,5 4.5,1.5 7,3 10.5,0 13.5,3.5 12.5,4.5 12.5,10.5 7,15 1,12" fill="#e4a8b2"/><polygon points="1.5,5 4.5,2 7,3.5 6,8 2,7" fill="#f6d8dc"/><polygon points="7,3 10.5,0.5 13,3.5 12,4.5 9,5" fill="#dcd4ec"/><rect x="6" y="6" width="2" height="8" fill="#f4e4e8"/><path d="M2.5 7 L2.5 11.5 L5 13 L5 8 Z" fill="#a82840"/><path d="M9.5 6.5 L11.5 5.5 L11.5 10.5 L9.5 12.5 Z" fill="#982038"/><polyline points="0.5,12.5 0.5,5 4.5,1.5 7,3.5 10.5,0.5 13.5,3.5" fill="none" stroke="#000" stroke-width="1"/><polyline points="12.5,4.5 12.5,11 7,15.5 0.5,12.5" fill="none" stroke="#000" stroke-width="1"/><path d="M7 3.5 L11.5 4.5" stroke="#401018" stroke-width="1"/></g><text x="46" y="294" font-family="Liberation Sans" font-size="11" textLength="58.0" lengthAdjust="spacingAndGlyphs">CPRJ_Client</text><g transform="translate(27,298)"><polygon points="1,5 4.5,1.5 7,3 10.5,0 13.5,3.5 12.5,4.5 12.5,10.5 7,15 1,12" fill="#e4a8b2"/><polygon points="1.5,5 4.5,2 7,3.5 6,8 2,7" fill="#f6d8dc"/><polygon points="7,3 10.5,0.5 13,3.5 12,4.5 9,5" fill="#dcd4ec"/><rect x="6" y="6" width="2" height="8" fill="#f4e4e8"/><path d="M2.5 7 L2.5 11.5 L5 13 L5 8 Z" fill="#a82840"/><path d="M9.5 6.5 L11.5 5.5 L11.5 10.5 L9.5 12.5 Z" fill="#982038"/><polyline points="0.5,12.5 0.5,5 4.5,1.5 7,3.5 10.5,0.5 13.5,3.5" fill="none" stroke="#000" stroke-width="1"/><polyline points="12.5,4.5 12.5,11 7,15.5 0.5,12.5" fill="none" stroke="#000" stroke-width="1"/><path d="M7 3.5 L11.5 4.5" stroke="#401018" stroke-width="1"/></g><text x="46" y="310" font-family="Liberation Sans" font-size="11" textLength="89.5" lengthAdjust="spacingAndGlyphs">CPRJ_GameServer</text><g transform="translate(27,314)"><polygon points="1,5 4.5,1.5 7,3 10.5,0 13.5,3.5 12.5,4.5 12.5,10.5 7,15 1,12" fill="#e4a8b2"/><polygon points="1.5,5 4.5,2 7,3.5 6,8 2,7" fill="#f6d8dc"/><polygon points="7,3 10.5,0.5 13,3.5 12,4.5 9,5" fill="#dcd4ec"/><rect x="6" y="6" width="2" height="8" fill="#f4e4e8"/><path d="M2.5 7 L2.5 11.5 L5 13 L5 8 Z" fill="#a82840"/><path d="M9.5 6.5 L11.5 5.5 L11.5 10.5 L9.5 12.5 Z" fill="#982038"/><polyline points="0.5,12.5 0.5,5 4.5,1.5 7,3.5 10.5,0.5 13.5,3.5" fill="none" stroke="#000" stroke-width="1"/><polyline points="12.5,4.5 12.5,11 7,15.5 0.5,12.5" fill="none" stroke="#000" stroke-width="1"/><path d="M7 3.5 L11.5 4.5" stroke="#401018" stroke-width="1"/></g><text x="46" y="326" font-family="Liberation Sans" font-size="11" textLength="100.5" lengthAdjust="spacingAndGlyphs">CPRJ_ShardManager</text><path d="M10 185 C14 183.5 25 183 34 183 C50 183 60 185 75 187.5 C85 189 95 188 102 187.5 C110 187 118 189 122 194 C126 199 127 205 125 209 C123 212 115 214 105 215 C95 216 85 217 75 218 C68 218.5 64 217 58 215 C45 214 30 213 15 212 C8 210 6 205 6 200 C6 194 7 189 10 185 Z" fill="none" stroke="#cc2020" stroke-width="2"/></svg>

<!-- right top form -->
<div class="t" style="left:210px;top:66px;letter-spacing:-0.5px">ModuleName</div>
<div class="t" style="left:210px;top:86px;letter-spacing:-0.44px">ContentID</div>
<div class="t" style="left:405px;top:66px">Latest Version</div>
<div class="t" style="left:405px;top:86px;letter-spacing:-0.08px">Patch Version</div>
<div class="a" style="left:295px;top:62px;width:100px;height:20px;border:1px solid;border-color:#808080 #fff #fff #808080"></div>
<div class="a" style="left:295px;top:82px;width:100px;height:20px;border:1px solid;border-color:#808080 #fff #fff #808080"></div>
<div class="a" style="left:510px;top:62px;width:60px;height:20px;border:1px solid;border-color:#808080 #fff #fff #808080"></div>
<div class="a" style="left:510px;top:82px;width:60px;height:20px;border:1px solid;border-color:#808080 #fff #fff #808080"></div>
<div class="a" style="left:573px;top:62px;width:100px;height:20px;border:1px solid;border-color:#808080 #fff #fff #808080"></div>
<div class="a" style="left:573px;top:82px;width:100px;height:20px;border:1px solid;border-color:#808080 #fff #fff #808080;background:#fff"></div>

<div class="pbtn" style="left:210px;top:107px;width:130px;height:20px"><div class="in"><div class="in"></div></div></div>
<div class="pbtn" style="left:390px;top:107px;width:130px;height:20px"><div class="in"><div class="in"></div></div></div>
<div class="pbtn" style="left:570px;top:107px;width:130px;height:20px"><div class="in"><div class="in"></div></div></div>
<div class="pbtn" style="left:750px;top:107px;width:130px;height:20px"><div class="in"><div class="in"></div></div></div>
<div class="t dis" style="left:234px;top:111px;letter-spacing:-0.32px">Read Patch Data</div>
<div class="t dis" style="left:402px;top:111px;letter-spacing:-0.13px">Clear UnknownGroup</div>
<div class="t dis" style="left:587px;top:111px;letter-spacing:-0.17px">Analyze Patch Data</div>
<div class="t dis" style="left:784px;top:111px;letter-spacing:-0.18px">Start Upload</div>

<svg class="a" style="left:0;top:0" width="1021" height="140"><path d="M341 115.5 h5 M341 117.5 h5 M347 115.5 h5 M347 117.5 h5 M353 115.5 h5 M353 117.5 h5 M359 115.5 h5 M359 117.5 h5 M365 115.5 h5 M365 117.5 h5 M371 115.5 h5 M371 117.5 h5 M377 112.5 L382 116.5 L377 120.5" stroke="#000" stroke-width="1" fill="none"/><path d="M521 115.5 h5 M521 117.5 h5 M527 115.5 h5 M527 117.5 h5 M533 115.5 h5 M533 117.5 h5 M539 115.5 h5 M539 117.5 h5 M545 115.5 h5 M545 117.5 h5 M551 115.5 h5 M551 117.5 h5 M557 112.5 L562 116.5 L557 120.5" stroke="#000" stroke-width="1" fill="none"/><path d="M701 115.5 h5 M701 117.5 h5 M707 115.5 h5 M707 117.5 h5 M713 115.5 h5 M713 117.5 h5 M719 115.5 h5 M719 117.5 h5 M725 115.5 h5 M725 117.5 h5 M731 115.5 h5 M731 117.5 h5 M737 112.5 L742 116.5 L737 120.5" stroke="#000" stroke-width="1" fill="none"/></svg>
<!-- group list -->
<div class="sunk" style="left:210px;top:137px;width:298px;height:150px"><div class="in"></div></div>
<div class="hdr" style="left:212px;top:139px;width:150px;height:17px"><div class="in"></div></div>
<div class="hdr" style="left:362px;top:139px;width:144px;height:17px"><div class="in"></div></div>
<div class="t" style="left:217px;top:143px;letter-spacing:-0.5px">Group Name</div>
<div class="t" style="left:216px;top:160px;letter-spacing:0.3px">All(*.*)</div>
<div class="t" style="left:216px;top:174px;letter-spacing:-0.4px">Unknown</div>

<div class="a" style="left:210px;top:292px;width:298px;height:317px;background:#fff;border-top:1px solid #808080;border-left:1px solid #808080"></div>
<div class="a" style="left:211px;top:609px;width:297px;height:1px;background:#d4d0c8"></div>

<!-- right list -->
<div class="sunk" style="left:510px;top:137px;width:508px;height:474px;border-right-color:#d4d0c8"><div class="in"></div></div>
<div class="hdr" style="left:512px;top:139px;width:150px;height:17px"><div class="in"></div></div>
<div class="hdr" style="left:662px;top:139px;width:249px;height:17px"><div class="in"></div></div>
<div class="hdr" style="left:911px;top:139px;width:101px;height:17px"><div class="in"></div></div>
<div class="a" style="left:1012px;top:139px;width:4px;height:17px;background:#d4d0c8;border-left:1px solid #fff;border-top:1px solid #fff;border-bottom:1px solid #404040"></div>
<div class="t" style="left:518px;top:143px">Name</div>
<div class="t" style="left:667px;top:143px">Path</div>
<div class="t" style="left:918px;top:143px">Size</div>

<div class="a" style="left:4px;top:610px;width:1014px;height:1px;background:#fff"></div>
<div class="a dith" style="left:528px;top:591px;width:471px;height:16px"></div>
<div class="a fb" style="left:512px;top:591px;width:17px;height:16px"></div>
<div class="a ft" style="left:528px;top:591px;width:335px;height:16px"></div>
<div class="a fb" style="left:999px;top:591px;width:16px;height:16px"></div>
<svg class="a" style="left:512px;top:591px" width="503" height="16"><path d="M10 4 L6 8 L10 12 Z" fill="#000"/><path d="M493 4 L497 8 L493 12 Z" fill="#000"/></svg>
<!-- log list -->
<div class="a" style="left:3px;top:615px;width:1015px;height:1px;background:#808080"></div>
<div class="a" style="left:4px;top:616px;width:1013px;height:1px;background:#404040"></div>
<div class="a" style="left:5px;top:617px;width:1013px;height:142px;background:#fff"></div>
<div class="a" style="left:5px;top:758px;width:1013px;height:1px;background:#d4d0c8"></div>
<div class="a" style="left:1017px;top:617px;width:1px;height:142px;background:#d4d0c8"></div>
<div class="hdr" style="left:5px;top:617px;width:60px;height:15px"><div class="in"></div></div>
<div class="hdr" style="left:65px;top:617px;width:360px;height:15px"><div class="in"></div></div>
<div class="hdr" style="left:425px;top:617px;width:149px;height:15px"><div class="in"></div></div>
<div class="hdr" style="left:574px;top:617px;width:427px;height:15px"><div class="in"></div></div>
<div class="t lg" style="left:11px;top:618px">Type</div>
<div class="t lg" style="left:71px;top:618px">Log</div>
<div class="t lg" style="left:432px;top:618px">Time</div>
<div class="t lg" style="left:6px;top:633px;color:#000">notify</div>
<div class="t lg" style="left:65px;top:633px;width:360px;height:13px;overflow:hidden">plugin loaded : <span style="color:#1c2a7a">SR_UserData,dll</span></div>
<div class="t lg tm" style="left:426px;top:633px;color:#000">2016/02/25 – 12:56:07 618</div>
<div class="t lg" style="left:6px;top:645px;color:#000">notify</div>
<div class="t lg" style="left:65px;top:645px;width:360px;height:13px;overflow:hidden">SR_UserEdit : SilkRoad Client is not Installed</div>
<div class="t lg tm" style="left:426px;top:645px;color:#000">2016/02/25 – 12:56:07 618</div>
<div class="t lg" style="left:6px;top:657px;color:#000">notify</div>
<div class="t lg" style="left:65px;top:657px;width:360px;height:13px;overflow:hidden">plugin loaded : <span style="color:#1c2a7a">SR_UserEdit,dll</span></div>
<div class="t lg tm" style="left:426px;top:657px;color:#000">2016/02/25 – 12:56:07 618</div>
<div class="t lg" style="left:6px;top:669px;color:#000">notify</div>
<div class="t lg" style="left:65px;top:669px;width:360px;height:13px;overflow:hidden">plugin loaded : <span style="color:#1c2a7a">SR_UserLog,dll</span></div>
<div class="t lg tm" style="left:426px;top:669px;color:#000">2016/02/25 – 12:56:07 618</div>
<div class="t lg" style="left:6px;top:681px;color:#a01818">fatal</div>
<div class="t lg" style="left:65px;top:681px;width:360px;height:13px;overflow:hidden">cannot read text file : EMailTemplate₩ª¬ÚÀÞ ÇÒ¶§ÀÇ ªî°´‡‡ÀÌÆÌÀÌÆ</div>
<div class="t lg tm" style="left:426px;top:681px;color:#a01818">2016/02/25 – 12:56:07 618</div>
<div class="t lg" style="left:6px;top:693px;color:#a01818">fatal</div>
<div class="t lg" style="left:65px;top:693px;width:360px;height:13px;overflow:hidden">email template parsing error</div>
<div class="t lg tm" style="left:426px;top:693px;color:#a01818">2016/02/25 – 12:56:07 618</div>
<div class="t lg" style="left:6px;top:705px;color:#000">notify</div>
<div class="t lg" style="left:65px;top:705px;width:360px;height:13px;overflow:hidden">plugin loaded : <span style="color:#1c2a7a">SR_UserPunishment,dll</span></div>
<div class="t lg tm" style="left:426px;top:705px;color:#000">2016/02/25 – 12:56:07 618</div>
<div class="t lg" style="left:6px;top:717px;color:#000">notify</div>
<div class="t lg" style="left:65px;top:717px;width:360px;height:13px;overflow:hidden">plugin loaded : <span style="color:#1c2a7a">UserControl,dll</span></div>
<div class="t lg tm" style="left:426px;top:717px;color:#000">2016/02/25 – 12:56:07 618</div>
<div class="t lg" style="left:6px;top:729px;color:#000">notify</div>
<div class="t lg" style="left:65px;top:729px;width:360px;height:13px;overflow:hidden">plugin loaded : <span style="color:#1c2a7a">UserStatistics,dll</span></div>
<div class="t lg tm" style="left:426px;top:729px;color:#000">2016/02/25 – 12:56:07 618</div>
<div class="t lg" style="left:6px;top:741px;color:#000">notify</div>
<div class="t lg" style="left:65px;top:741px;width:360px;height:13px;overflow:hidden">Plugin was Loaded,</div>
<div class="t lg tm" style="left:426px;top:741px;color:#000">2016/02/25 – 12:56:07 618</div>
<div class="a dith" style="left:1001px;top:633px;width:16px;height:70px"></div>
<div class="a fb" style="left:1001px;top:617px;width:16px;height:16px"></div>
<div class="a ft" style="left:1001px;top:703px;width:16px;height:40px"></div>
<div class="a fb" style="left:1001px;top:742px;width:16px;height:16px"></div>
<svg class="a" style="left:1001px;top:617px" width="16" height="141"><path d="M4 10 L8 6 L12 10 Z" fill="#000"/><path d="M4 132 L12 132 L8 136 Z" fill="#000"/></svg>

<div class="a" style="left:1019px;top:0;width:2px;height:761px;background:#d4d0c8"></div>
</body></html>
